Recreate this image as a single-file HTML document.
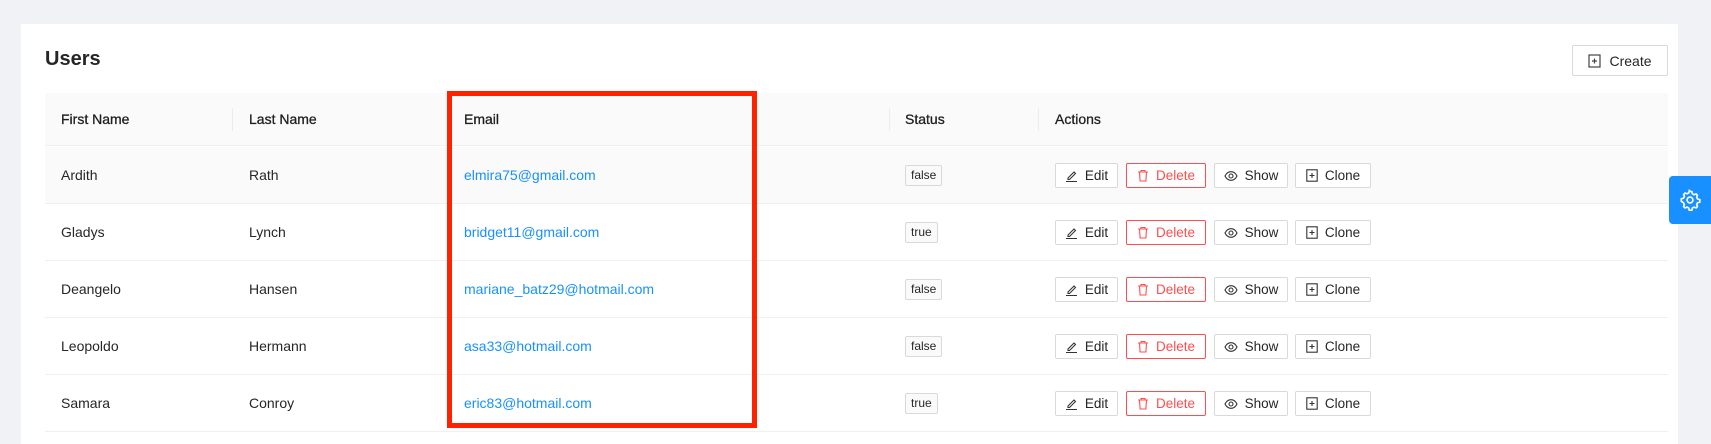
<!DOCTYPE html>
<html><head><meta charset="utf-8"><style>
*{box-sizing:border-box;margin:0;padding:0}
body{width:1711px;height:435px;overflow:hidden;background:#f0f2f5;font-family:"Liberation Sans",sans-serif;font-size:14px;color:#262626;position:relative}
.card{position:absolute;left:21px;top:24px;width:1657px;height:420px;background:#fff}
.title{position:absolute;left:45px;top:48px;font-size:20px;font-weight:bold;color:#262626}
.create{position:absolute;left:1572px;top:45px;width:96px;height:31px;border:1px solid #d9d9d9;border-radius:2px;background:#fff;display:flex;align-items:center;justify-content:center;gap:8px;font-size:14px}
.hdr{position:absolute;left:45px;top:93px;width:1623px;height:53px;background:#fafafa;border-bottom:1px solid #f0f0f0}
.row{position:absolute;left:45px;width:1623px;height:57px;border-bottom:1px solid #f0f0f0}
.c{position:absolute;top:0;height:100%;display:flex;align-items:center}
.hdr .c{font-weight:normal;color:#1f1f1f;-webkit-text-stroke:0.3px #1f1f1f}
.sep{position:absolute;top:15px;width:1px;height:23px;background:#ececec}
.em{color:#1890ff}
.tag{height:21px;padding:0 5px;border:1px solid #d9d9d9;background:#fafafa;border-radius:2px;font-size:12px;display:flex;align-items:center}
.btn{position:absolute;top:16px;height:25px;border:1px solid #d9d9d9;border-radius:2px;background:#fff;display:flex;align-items:center;justify-content:center;gap:7px;font-size:13.5px}
.del{border-color:#ff4d4f;color:#ff4d4f}
.red{position:absolute;left:447px;top:91px;width:310px;height:337px;border:5px solid #ff2200}
.gear{position:absolute;left:1669px;top:176px;width:42px;height:48px;background:#1890ff;border-radius:4px 0 0 4px;display:flex;align-items:center;justify-content:center}
</style></head><body>
<div class="card"></div>
<div class="title">Users</div>
<div class="create"><svg width="13" height="14" viewBox="0 0 13 14"><rect x="1" y="1" width="11" height="12" fill="none" stroke="#444" stroke-width="1.2"/><path d="M6.5 4.5v5M4 7h5" stroke="#444" stroke-width="1.2"/></svg>Create</div>
<div class="hdr">
<div class="c" style="left:16px">First Name</div>
<div class="sep" style="left:187px"></div>
<div class="c" style="left:204px">Last Name</div>
<div class="c" style="left:419px">Email</div>
<div class="sep" style="left:844px"></div>
<div class="c" style="left:860px">Status</div>
<div class="sep" style="left:993px"></div>
<div class="c" style="left:1010px">Actions</div>
</div>
<div id="rows"></div>
<div class="red"></div>
<div class="gear"><svg width="22" height="22" viewBox="0 0 24 24" fill="none" stroke="#fff" stroke-width="1.8"><circle cx="12" cy="12" r="3.2"/><path d="M12 2.5l2 .3.6 2.4 1.8 1 2.3-.8 1.4 1.5-.8 2.3 1 1.8 2.4.6v2.8l-2.4.6-1 1.8.8 2.3-1.4 1.5-2.3-.8-1.8 1-.6 2.4h-2.8l-.6-2.4-1.8-1-2.3.8-1.5-1.5.8-2.3-1-1.8L2.5 13.4v-2.8l2.4-.6 1-1.8-.8-2.3 1.5-1.5 2.3.8 1.8-1 .6-2.4z"/></svg></div>
<script>
var d=[["Ardith","Rath","elmira75@gmail.com","false"],["Gladys","Lynch","bridget11@gmail.com","true"],["Deangelo","Hansen","mariane_batz29@hotmail.com","false"],["Leopoldo","Hermann","asa33@hotmail.com","false"],["Samara","Conroy","eric83@hotmail.com","true"]];
var h="";
var edit='<svg width="13" height="13" viewBox="0 0 13 13"><path d="M3 9l6-6 1.5 1.5-6 6H3z M1 12.5h11" fill="none" stroke="#333" stroke-width="1.1"/></svg>';
var trash='<svg width="12" height="13" viewBox="0 0 12 13"><path d="M1 3h10M4 3V1.5h4V3M2.5 3l.6 9h5.8l.6-9" fill="none" stroke="#ff4d4f" stroke-width="1.1"/></svg>';
var eye='<svg width="14" height="12" viewBox="0 0 14 12"><path d="M1 6c1.5-3 3.5-4.3 6-4.3S11.5 3 13 6c-1.5 3-3.5 4.3-6 4.3S2.5 9 1 6z" fill="none" stroke="#333" stroke-width="1.1"/><circle cx="7" cy="6" r="2" fill="none" stroke="#333" stroke-width="1.1"/></svg>';
var clone='<svg width="12" height="13" viewBox="0 0 12 13"><rect x=".8" y=".8" width="10.4" height="11.4" fill="none" stroke="#333" stroke-width="1.1"/><path d="M6 4v5M3.5 6.5h5" stroke="#333" stroke-width="1.1"/></svg>';
d.forEach(function(r,i){
h+='<div class="row" style="top:'+(147+i*57)+'px;'+(i==0?'background:#fafafa':'')+'">'+
'<div class="c" style="left:16px">'+r[0]+'</div><div class="c" style="left:204px">'+r[1]+'</div>'+
'<div class="c em" style="left:419px">'+r[2]+'</div><div class="c" style="left:860px"><span class="tag">'+r[3]+'</span></div>'+
'<div class="btn" style="left:1010px;width:63px">'+edit+'Edit</div>'+
'<div class="btn del" style="left:1081px;width:80px">'+trash+'Delete</div>'+
'<div class="btn" style="left:1169px;width:74px">'+eye+'Show</div>'+
'<div class="btn" style="left:1250px;width:76px">'+clone+'Clone</div></div>';
});
document.getElementById("rows").innerHTML=h;
</script>
</body></html>
